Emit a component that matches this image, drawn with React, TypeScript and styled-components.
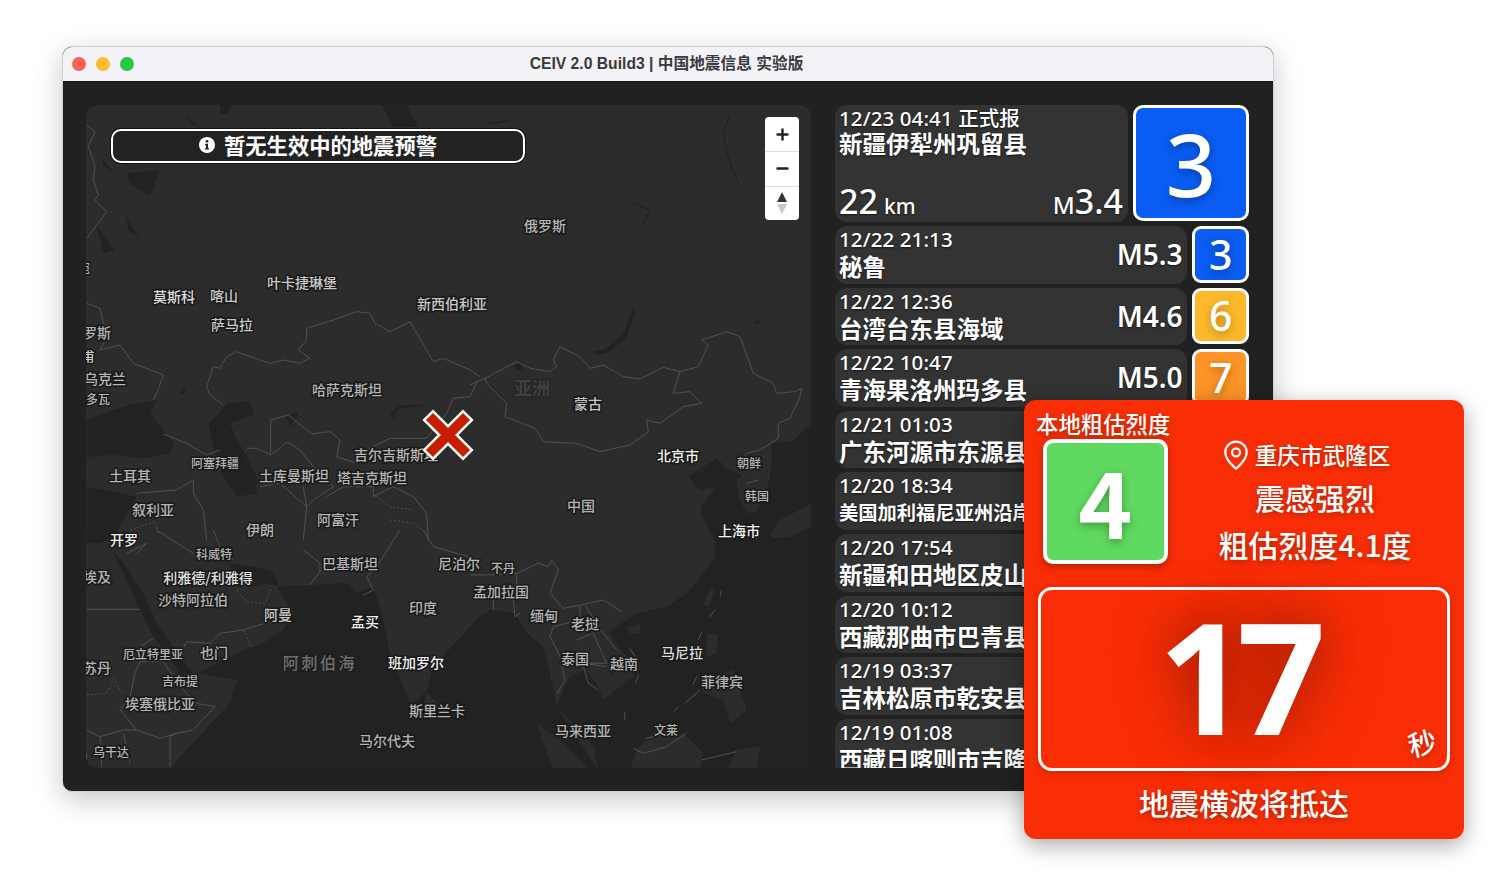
import styled, { createGlobalStyle } from "styled-components";
import { MapPin, Minus, Plus } from "lucide-react";

const CJK = `"Noto Sans", "Noto Sans CJK SC", sans-serif`;

const GlobalStyle = createGlobalStyle`
    html, body {
        margin: 0;
        background: #ffffff;
    }
    * {
        box-sizing: border-box;
    }
`;

const Page = styled.div`
    width: 1500px;
    height: 873px;
    padding: 46px 0 0 62px;
    overflow: hidden;
    font-family: ${CJK};
`;

const Window = styled.div`
    position: relative;
    width: 1212px;
    height: 746px;
    border-radius: 10px;
    border: 1px solid #d2d2d2;
    background: #212121;
    box-shadow: 0 8px 28px rgba(0, 0, 0, 0.22);
    display: flex;
    flex-direction: column;
`;

const TitleBar = styled.div`
    position: relative;
    height: 35px;
    flex: none;
    background: #f3f2f7;
    border-radius: 9px 9px 0 0;
    display: flex;
    align-items: center;
    justify-content: center;
    color: #3a3a3a;
    font-size: 15.7px;
    font-weight: 700;
    font-family: "Liberation Sans", "Noto Sans CJK SC", sans-serif;
    padding: 0 3px 3px 0;
    border-bottom: 1px solid #111;
`;

const Lights = styled.div`
    position: absolute;
    left: 9px;
    top: 10px;
    display: flex;
    gap: 10px;
`;

const Light = styled.span<{ $color: string }>`
    width: 14px;
    height: 14px;
    border-radius: 50%;
    background: ${(p) => p.$color};
`;

const Body = styled.div`
    flex: 1;
    min-height: 0;
    padding: 23px 24px 23px 23px;
    display: grid;
    grid-template-columns: 725px 414px;
    column-gap: 24px;
`;

const MapPanel = styled.div`
    position: relative;
    height: 663px;
    border-radius: 12px;
    overflow: hidden;
    background: #2c2c2c;
`;

const MapSvg = styled.svg`
    position: absolute;
    inset: 0;
    display: block;
`;

const PlaceLabel = styled.span<{ $size: number; $tone: string; $spacing: number; $halo: string }>`
    position: absolute;
    transform: translate(-50%, -57%);
    white-space: nowrap;
    line-height: 1;
    font-family: "Noto Sans CJK SC", sans-serif;
    font-size: ${(p) => p.$size}px;
    font-weight: 500;
    letter-spacing: ${(p) => p.$spacing}px;
    color: ${(p) => p.$tone};
    -webkit-text-stroke: 3px ${(p) => p.$halo};
    paint-order: stroke fill;
`;

const AlertBar = styled.div`
    position: absolute;
    left: 25px;
    top: 24px;
    width: 414px;
    height: 34px;
    border: 2px solid #ffffff;
    border-radius: 10px;
    background: #222222;
    box-shadow: 0 0 0 1px #111;
    display: flex;
    align-items: center;
    justify-content: center;
    gap: 9px;
    padding-bottom: 3px;
    color: #ffffff;
    font-family: "Noto Sans CJK SC", sans-serif;
    font-size: 21.3px;
    font-weight: 700;
    line-height: 1;
`;

const ZoomControl = styled.div`
    position: absolute;
    left: 679px;
    top: 12px;
    width: 34px;
    height: 103px;
    border-radius: 4px;
    background: #ffffff;
    display: grid;
    grid-template-rows: repeat(3, 1fr);
    color: #222;
`;

const ZoomCell = styled.div`
    display: flex;
    align-items: center;
    justify-content: center;
    & + & {
        border-top: 1px solid #dddddd;
    }
`;

const Marker = styled.svg`
    position: absolute;
    left: 335px;
    top: 303px;
`;

const List = styled.div`
    height: 663px;
    overflow: hidden;
    display: flex;
    flex-direction: column;
    gap: 4px;
`;

const TopRow = styled.div`
    display: flex;
    gap: 5px;
    height: 117px;
    flex: none;
`;

const Row = styled.div`
    display: flex;
    gap: 5px;
    height: 57.6px;
    flex: none;
`;

const Card = styled.div`
    flex: 1;
    min-width: 0;
    background: #333333;
    border-radius: 12px;
    padding: 1px 5px 0 4px;
    color: #ffffff;
    position: relative;
    display: flex;
    justify-content: space-between;
    text-shadow: 0 1px 2px rgba(0, 0, 0, 0.6);
`;

const TopCard = styled(Card)`
    flex-direction: column;
    padding-bottom: 0;
`;

const TimeText = styled.div`
    font-size: 20.5px;
    line-height: 24px;
    font-weight: 500;
    white-space: nowrap;
    letter-spacing: 0.1px;
`;

const PlaceName = styled.div<{ $size: number; $lift?: boolean }>`
    font-family: "Noto Sans CJK SC", sans-serif;
    font-size: ${(p) => p.$size}px;
    line-height: 29px;
    font-weight: 700;
    white-space: nowrap;
    margin-top: ${(p) => (p.$lift ? -1 : 1)}px;
`;

const Magnitude = styled.div`
    font-size: 28px;
    font-weight: 600;
    line-height: 54px;
    flex: none;
`;

const TopStats = styled.div`
    display: flex;
    justify-content: space-between;
    align-items: baseline;
    line-height: 34px;
    margin-bottom: -3px;
`;

const BigNumber = styled.span`
    font-size: 34px;
    font-weight: 500;
`;

const SmallUnit = styled.span`
    font-size: 21px;
    font-weight: 500;
    margin-left: 6px;
`;

const TinyUnit = styled.span`
    font-size: 24px;
    font-weight: 500;
`;

const Badge = styled.div<{ $size: number; $bg: string; $font: number }>`
    width: ${(p) => p.$size}px;
    height: ${(p) => p.$size}px;
    flex: none;
    border: 3px solid #ffffff;
    border-radius: ${(p) => (p.$size > 80 ? 10 : 9)}px;
    background: ${(p) => p.$bg};
    color: #ffffff;
    display: flex;
    align-items: center;
    justify-content: center;
    font-size: ${(p) => p.$font}px;
    font-weight: 500;
    line-height: 1;
    text-shadow: 0 3px 8px rgba(0, 0, 0, 0.3);
`;

const Overlay = styled.div`
    position: absolute;
    left: 961px;
    top: 353px;
    width: 440px;
    height: 439px;
    border-radius: 12px;
    background: #fa2e06;
    box-shadow: 0 6px 22px rgba(0, 0, 0, 0.35);
    color: #ffffff;
    font-family: "Noto Sans CJK SC", sans-serif;
    text-shadow: 0 2px 6px rgba(0, 0, 0, 0.3);
    display: flex;
    flex-direction: column;
`;

const OverlayTop = styled.div`
    display: grid;
    grid-template-columns: 146px 1fr;
    height: 187px;
`;

const LocalColumn = styled.div`
    padding: 7px 0 0 12px;
    display: flex;
    flex-direction: column;
`;

const LocalTitle = styled.div`
    font-size: 22.4px;
    line-height: 32px;
    font-weight: 500;
    white-space: nowrap;
`;

const LocalBadge = styled(Badge)`
    margin-left: 7px;
    border-width: 4px;
    border-radius: 10px;
    font-weight: 700;
    padding-bottom: 5px;
    box-shadow: 0 3px 8px rgba(0, 0, 0, 0.3);
`;

const LocalInfo = styled.div`
    padding: 39px 4px 0 0;
    display: flex;
    flex-direction: column;
    align-items: center;
`;

const LocationLine = styled.div`
    display: flex;
    align-items: center;
    gap: 3px;
    font-size: 22.6px;
    line-height: 30px;
    font-weight: 500;
    margin: 0 20px 3px 0;
`;

const InfoLine = styled.div`
    font-size: 30px;
    line-height: 47px;
    font-weight: 500;
    white-space: nowrap;
`;

const TimerBox = styled.div`
    position: relative;
    margin: 0 14px 0 14px;
    height: 184px;
    border: 3px solid #ffffff;
    border-radius: 14px;
    box-shadow: 0 2px 10px rgba(0, 0, 0, 0.18);
    display: flex;
    align-items: center;
    justify-content: center;
    padding: 0 14px 9px 0;
`;

const Countdown = styled.div`
    font-size: 155px;
    font-weight: 700;
    line-height: 1;
    letter-spacing: -10px;
    font-family: "Noto Sans", sans-serif;
    text-shadow: 0 0 50px rgba(90, 20, 0, 0.55), 0 0 70px rgba(90, 20, 0, 0.35);
`;

const Seconds = styled.span`
    position: absolute;
    right: 11px;
    bottom: 12px;
    font-size: 28px;
    font-weight: 500;
    line-height: 1;
    transform: rotate(-14deg);
`;

const Footer = styled.div`
    flex: 1;
    display: flex;
    align-items: center;
    justify-content: center;
    font-size: 30px;
    font-weight: 500;
    line-height: 1;
    padding-bottom: 6px;
`;

const BLUE = "#0a5cf2";
const YELLOW = "#fdb92b";
const ORANGE = "#fd9526";

const rows: { time: string; place: string; mag?: string; level?: number; color?: string; size?: number }[] = [
    { time: "12/22 21:13", place: "秘鲁", mag: "M5.3", level: 3, color: BLUE },
    { time: "12/22 12:36", place: "台湾台东县海域", mag: "M4.6", level: 6, color: YELLOW },
    { time: "12/22 10:47", place: "青海果洛州玛多县", mag: "M5.0", level: 7, color: ORANGE },
    { time: "12/21 01:03", place: "广东河源市东源县" },
    { time: "12/20 18:34", place: "美国加利福尼亚州沿岸", size: 19.3 },
    { time: "12/20 17:54", place: "新疆和田地区皮山县" },
    { time: "12/20 10:12", place: "西藏那曲市巴青县" },
    { time: "12/19 03:37", place: "吉林松原市乾安县" },
    { time: "12/19 01:08", place: "西藏日喀则市吉隆县" },
];

const BRIGHT = "#f2f2f2";
const MID = "#b4b4b4";
const SOFT = "#c8c8c8";

// [text, x, y, size, tone] in screenshot coordinates
const places: [string, number, number, number, string][] = [
    ["俄罗斯", 545, 226, 14, MID],
    ["叶卡捷琳堡", 302, 283, 14, SOFT],
    ["莫斯科", 174, 297, 14, "#dddddd"],
    ["喀山", 224, 296, 14, SOFT],
    ["萨马拉", 232, 325, 14, SOFT],
    ["新西伯利亚", 452, 304, 14, SOFT],
    ["罗斯", 97, 333, 14, MID],
    ["宛", 84, 269, 12, MID],
    ["甫", 88, 356, 13, "#cccccc"],
    ["乌克兰", 105, 379, 14, MID],
    ["多瓦", 98, 400, 12, MID],
    ["哈萨克斯坦", 347, 390, 14, MID],
    ["吉尔吉斯斯坦", 396, 455, 14, MID],
    ["塔吉克斯坦", 372, 478, 14, MID],
    ["土库曼斯坦", 294, 476, 14, MID],
    ["阿塞拜疆", 215, 464, 12, MID],
    ["土耳其", 130, 476, 14, MID],
    ["叙利亚", 153, 510, 14, MID],
    ["伊朗", 260, 530, 14, MID],
    ["阿富汗", 338, 520, 14, MID],
    ["巴基斯坦", 350, 564, 14, MID],
    ["开罗", 124, 540, 14, BRIGHT],
    ["埃及", 97, 577, 14, MID],
    ["科威特", 214, 555, 12, MID],
    ["利雅德/利雅得", 208, 578, 14, "#e0e0e0"],
    ["沙特阿拉伯", 193, 600, 14, MID],
    ["阿曼", 278, 615, 14, SOFT],
    ["孟买", 365, 622, 14, BRIGHT],
    ["印度", 423, 608, 14, MID],
    ["尼泊尔", 459, 564, 14, MID],
    ["不丹", 503, 569, 12, MID],
    ["孟加拉国", 501, 592, 14, MID],
    ["缅甸", 544, 616, 14, MID],
    ["老挝", 585, 624, 14, MID],
    ["泰国", 575, 659, 14, MID],
    ["越南", 624, 664, 14, MID],
    ["马尼拉", 682, 653, 14, "#dddddd"],
    ["菲律宾", 722, 682, 14, MID],
    ["马来西亚", 583, 731, 14, MID],
    ["文莱", 666, 731, 12, MID],
    ["中国", 581, 506, 14, MID],
    ["蒙古", 588, 404, 14, SOFT],
    ["北京市", 678, 456, 14, BRIGHT],
    ["上海市", 739, 531, 14, BRIGHT],
    ["朝鲜", 749, 464, 12, MID],
    ["韩国", 757, 497, 12, MID],
    ["也门", 214, 653, 14, MID],
    ["厄立特里亚", 153, 655, 12, MID],
    ["苏丹", 97, 668, 14, MID],
    ["吉布提", 180, 682, 12, MID],
    ["埃塞俄比亚", 160, 704, 14, MID],
    ["乌干达", 111, 753, 12, MID],
    ["班加罗尔", 416, 663, 14, BRIGHT],
    ["斯里兰卡", 437, 711, 14, MID],
    ["马尔代夫", 387, 741, 14, MID],
];

const WATER = "#222222";
const LAND = "#2c2c2c";
const LINE = "#515151";

// Each group keeps the coordinates read off a 3x crop of the screenshot
const Region: React.FC<{ x: number; y: number; children: React.ReactNode }> = ({ x, y, children }) => (
    <g transform={`translate(${x} ${y}) scale(0.3333)`}>{children}</g>
);

const Border: React.FC<{ d: string; dashed?: boolean }> = ({ d, dashed }) => (
    <path
        d={d}
        fill="none"
        stroke={LINE}
        strokeWidth={1}
        strokeDasharray={dashed ? "2 2" : undefined}
        vectorEffect="non-scaling-stroke"
    />
);

const WorldMap = () => (
    <MapSvg width={725} height={663} viewBox="86 105 725 663">
        {/* oceans */}
        <path
            fill={WATER}
            d="M598,770 L557,707 L550,673 L543,647 L527,633 L515,613 L490,610 L478,617 L470,627 L433,667 L427,690 L418,700 L410,703 L390,653 L381,610 L373,587 L357,593 L347,583 L310,585 L277,587 L293,612 L283,630 L263,643 L240,652 L197,673 L237,680 L230,703 L180,757 L170,770 Z"
        />
        <Region x={470} y={280}>
            <path
                fill={WATER}
                d="M1025,430 L965,485 L905,490 L905,560 L890,640 L860,695 L830,700 L805,650 L800,600 L815,585 L770,565 L740,535 L700,560 L655,590 L690,630 L740,620 L690,680 L705,730 L735,780 L735,830 L700,880 L650,940 L590,980 L500,1000 L470,1020 L415,1055 L445,1100 L490,1150 L490,1190 L400,1260 L380,1210 L345,1170 L300,1190 L275,1240 L260,1280 L300,1320 L370,1400 L385,1470 L1025,1470 Z"
            />
            <g fill={LAND}>
                <path d="M900,760 L930,720 L1025,670 L1025,740 L960,770 L910,775 Z" />
                <path d="M700,970 L725,920 L735,930 L715,985 Z" />
                <path d="M470,1045 L510,1030 L510,1060 L480,1065 Z" />
                <path d="M710,1060 L745,1065 L740,1120 L710,1130 Z" />
                <path d="M690,1200 L790,1170 L830,1290 L780,1330 L760,1260 L700,1240 Z" />
                <path d="M480,1470 L500,1410 L560,1350 L640,1360 L700,1420 L690,1470 Z" />
                <path d="M770,1470 L800,1410 L870,1400 L860,1470 Z" />
                <path d="M200,1330 L270,1380 L360,1470 L250,1470 Z" />
            </g>
            <g fill={WATER}>
                <path d="M370,215 L410,205 L460,160 L490,80 L495,100 L470,170 L420,215 L385,225 Z" />
                <path d="M135,255 L155,250 L155,270 L140,272 Z" />
                <path d="M850,125 L875,115 L865,135 Z" />
            </g>
            <Border d="M0,315 L45,295 L140,245 L180,265 L240,275 L260,260 L250,240 L270,200 L330,230 L360,265 L400,255 L460,290 L510,297 L580,262 L630,275 L610,340 L660,335 L695,370 L640,380 L570,430 L530,420 L535,455 L480,495 L390,515 L320,490 L220,485 L195,445 L105,410 L110,370 L50,310 L45,295" />
            <Border d="M630,275 L685,260 L715,195 L695,180 L770,155 L810,170 L850,280 L910,310 L920,340 L975,335 L995,325 L990,350 L960,415 L925,430 L925,475 L870,510 L830,520 L800,560" />
            <Border d="M830,610 L865,600" />
            <Border d="M0,885 L60,885 L140,880 L205,850 L235,860 L245,840 L265,870 L240,940 L280,985 L335,975 L400,960 L455,995" />
            <Border d="M330,975 L330,1020 L250,1040 L240,1070 L270,1130 L285,1200 L262,1240" />
            <Border d="M320,1080 L370,1060 L410,1150 L340,1150 L410,1160 M345,975 L400,1060 L440,1110 M340,1160 L355,1210 L385,1230" />
            <Border d="M70,990 L70,940 L130,960 L135,1010 L150,1000 M140,880 L140,960" />
            <Border d="M490,1405 L520,1420 L590,1400 L650,1360 M525,1375 L575,1365 M695,1440 L800,1415" />
            <Border d="M755,930 L750,950 M735,990 L718,1012 M695,1055 L685,1080 M505,1185 L497,1210 M465,1295 L463,1320 M680,1190 L670,1212 M690,1230 L645,1270 M625,1280 L610,1295 M480,1105 L495,1130" />
        </Region>
        <Region x={80} y={280}>
            <g fill={WATER}>
                <path d="M20,420 L100,390 L150,375 L230,360 L210,400 L280,490 L270,520 L190,535 L100,525 L20,530 Z" />
                <path d="M20,620 L120,640 L170,650 L130,720 L100,770 L60,790 L20,790 Z" />
                <path d="M440,370 L510,365 L520,405 L450,430 L470,480 L500,530 L530,590 L530,640 L470,650 L430,590 L400,500 L385,430 L420,400 Z" />
                <path d="M620,410 L660,392 L630,440 Z" />
                <path d="M930,400 L960,375 L1040,375 L960,385 L940,415 Z" />
                <path d="M295,345 L320,315 L315,340 Z" />
            </g>
            <Border d="M380,320 L400,260 L420,265 L440,230 L470,215 L540,240 L570,250 L610,240 L660,250 L690,235 L655,210 L680,180 L680,145 L760,120 L830,95 L870,100 L885,130 L930,155 L990,125 L1060,245 L1090,235 L1170,270 L1200,290" />
            <Border d="M1195,300 L1170,350 L1120,355 L1100,400 L1040,475 L930,475 L880,500 L820,525" />
            <Border d="M380,320 L390,345 L430,375 M572,520 L572,420 L625,405 L695,462 L750,455 L780,480 L770,530 L830,550" />
            <Border d="M500,505 L530,505 L572,525 L600,505 L620,485 L660,510 L700,560 L760,620 L700,660 L680,680 L670,620" />
            <Border d="M250,462 L320,490 L380,525 L420,510 M740,650 L790,620 L880,620 L880,650 L940,620 L1000,650 L1040,700 L1045,780" />
            <Border d="M170,640 L290,630 L340,600 L340,640 L370,690 L380,780 M540,620 L600,610 L680,680 L670,780" />
            <Border d="M20,70 L60,85 L70,130 L90,155 L60,210 L120,195 L160,250 L250,285 L230,340 L220,360" />
            <Border d="M150,750 L225,725 L235,760 M890,650 L930,680 L1000,690 M930,720 L1000,730 L1040,760" dashed />
        </Region>
        <Region x={80} y={530}>
            <g fill={WATER}>
                <path d="M95,60 L130,100 L190,190 L230,280 L300,380 L340,430 L300,430 L260,370 L220,320 L180,240 L130,130 Z" />
                <path d="M440,100 L520,110 L580,125 L600,170 L560,160 L510,170 L480,140 Z" />
                <path d="M20,0 L60,0 L30,40 L20,40 Z" />
            </g>
            <g fill={LAND}>
                <path d="M1040,490 L1075,520 L1060,565 L1030,545 Z" />
            </g>
            <Border d="M670,60 L720,100 L720,125 L690,165 M960,0 L890,110 L860,140 L880,180 L850,195 M1030,0 L1060,50 L1200,90" />
            <Border d="M400,0 L420,50 L460,90 M230,0 L340,70 M140,70 L200,40 L170,70 M20,238 L180,238" />
            <Border d="M220,325 L180,350 M310,355 L320,335 L390,340 L420,310 L490,300 L555,280" />
            <Border d="M180,395 L250,395 L310,480 L350,520 L405,530 L340,600 L290,610 L240,625 L170,600 L120,540 L150,500 L165,430 L180,395" />
            <Border d="M270,710 L270,620 L290,610 M20,600 L60,620 L130,600 L170,600 M60,620 L65,710 M130,610 L150,700 M20,670 L20,710" />
            <Border d="M490,300 L515,350 M470,180 L500,215 L555,222 L575,170 M20,495 L80,490 L100,445 L125,490" dashed />
        </Region>
        <Region x={60} y={40}>
            <g fill={WATER}>
                <path d="M200,400 L300,390 L270,470 L210,430 Z" />
                <path d="M110,560 L165,630 L130,640 Z" />
                <path d="M195,520 L235,590 L205,570 Z" />
                <path d="M125,355 L160,395 L130,380 Z" />
                <path d="M380,230 L420,262 L395,255 Z" />
                <path d="M480,195 L515,195 L505,222 L478,220 Z" />
                <path d="M965,195 L1040,195 L1075,260 L1000,262 Z" />
                <path d="M1270,250 L1360,238 L1310,252 Z" />
            </g>
            <Border d="M80,255 L105,275 L85,320 L105,375 L100,420 L115,465 L105,480 L140,515 L80,595" />
        </Region>
        <Region x={480} y={100}>
            <path
                fill="none"
                stroke="#232323"
                strokeWidth={1.5}
                vectorEffect="non-scaling-stroke"
                d="M748,50 L730,100 L740,150 L750,190 L778,255 M460,310 L510,330 L490,370"
            />
        </Region>
    </MapSvg>
);

const App = () => {
    return (
        <Page>
            <GlobalStyle />
            <Window>
                <TitleBar>
                    <Lights>
                        <Light $color="#fe5f57" />
                        <Light $color="#febc2e" />
                        <Light $color="#28c840" />
                    </Lights>
                    CEIV 2.0 Build3 | 中国地震信息 实验版
                </TitleBar>
                <Body>
                    <MapPanel>
                        <WorldMap />
                        {places.map(([text, x, y, size, tone]) => (
                            <PlaceLabel
                                key={text}
                                $size={size}
                                $tone={tone}
                                $spacing={0}
                                $halo="#1a1a1a"
                                style={{ left: x - 86, top: y - 105 }}
                            >
                                {text}
                            </PlaceLabel>
                        ))}
                        <PlaceLabel $size={18} $tone="#434343" $spacing={0} $halo="#262626" style={{ left: 446, top: 283 }}>
                            亚洲
                        </PlaceLabel>
                        <PlaceLabel $size={16} $tone="#6e6e6e" $spacing={2.6} $halo="#1e1e1e" style={{ left: 234, top: 558 }}>
                            阿刺伯海
                        </PlaceLabel>
                        <Marker width={54} height={54} viewBox="0 0 54 54">
                            <path d="M12,12 L42,42 M42,12 L12,42" stroke="#ffffff" strokeWidth={15} strokeLinecap="square" />
                            <path d="M12,12 L42,42 M42,12 L12,42" stroke="#c81e00" strokeWidth={10} strokeLinecap="square" />
                        </Marker>
                        <AlertBar>
                            <svg width={16} height={16} viewBox="0 0 16 16">
                                <circle cx={8} cy={8} r={8} fill="#ffffff" />
                                <circle cx={8} cy={4.3} r={1.4} fill="#222222" />
                                <path d="M6,6.8 H9 V11.2 H10.2 V12.6 H5.8 V11.2 H7 V8.2 H6 Z" fill="#222222" />
                            </svg>
                            暂无生效中的地震预警
                        </AlertBar>
                        <ZoomControl>
                            <ZoomCell>
                                <Plus size={17} strokeWidth={3.4} />
                            </ZoomCell>
                            <ZoomCell>
                                <Minus size={17} strokeWidth={3.4} />
                            </ZoomCell>
                            <ZoomCell>
                                <svg width={12} height={24} viewBox="0 0 12 24">
                                    <path d="M6,1 L11,11 H1 Z" fill="#333333" />
                                    <path d="M6,23 L11,13 H1 Z" fill="#c8c8c8" />
                                </svg>
                            </ZoomCell>
                        </ZoomControl>
                    </MapPanel>
                    <List>
                        <TopRow>
                            <TopCard>
                                <div>
                                    <TimeText>12/23 04:41 正式报</TimeText>
                                    <PlaceName $size={23.5} $lift>新疆伊犁州巩留县</PlaceName>
                                </div>
                                <TopStats>
                                    <span>
                                        <BigNumber>22</BigNumber>
                                        <SmallUnit>km</SmallUnit>
                                    </span>
                                    <span>
                                        <TinyUnit>M</TinyUnit>
                                        <BigNumber>3.4</BigNumber>
                                    </span>
                                </TopStats>
                            </TopCard>
                            <Badge $size={116} $bg={BLUE} $font={88}>
                                3
                            </Badge>
                        </TopRow>
                        {rows.map((row) => (
                            <Row key={row.time}>
                                <Card>
                                    <div>
                                        <TimeText>{row.time}</TimeText>
                                        <PlaceName $size={row.size ?? 23.5}>{row.place}</PlaceName>
                                    </div>
                                    {row.mag && <Magnitude>{row.mag}</Magnitude>}
                                </Card>
                                <Badge $size={56.6} $bg={row.color ?? BLUE} $font={41}>
                                    {row.level}
                                </Badge>
                            </Row>
                        ))}
                    </List>
                </Body>
                <Overlay>
                    <OverlayTop>
                        <LocalColumn>
                            <LocalTitle>本地粗估烈度</LocalTitle>
                            <LocalBadge $size={125} $bg="#5fd95f" $font={92}>
                                4
                            </LocalBadge>
                        </LocalColumn>
                        <LocalInfo>
                            <LocationLine>
                                <MapPin size={32} strokeWidth={1.7} />
                                重庆市武隆区
                            </LocationLine>
                            <InfoLine>震感强烈</InfoLine>
                            <InfoLine>粗估烈度4.1度</InfoLine>
                        </LocalInfo>
                    </OverlayTop>
                    <TimerBox>
                        <Countdown>17</Countdown>
                        <Seconds>秒</Seconds>
                    </TimerBox>
                    <Footer>地震横波将抵达</Footer>
                </Overlay>
            </Window>
        </Page>
    );
};

export default App;
